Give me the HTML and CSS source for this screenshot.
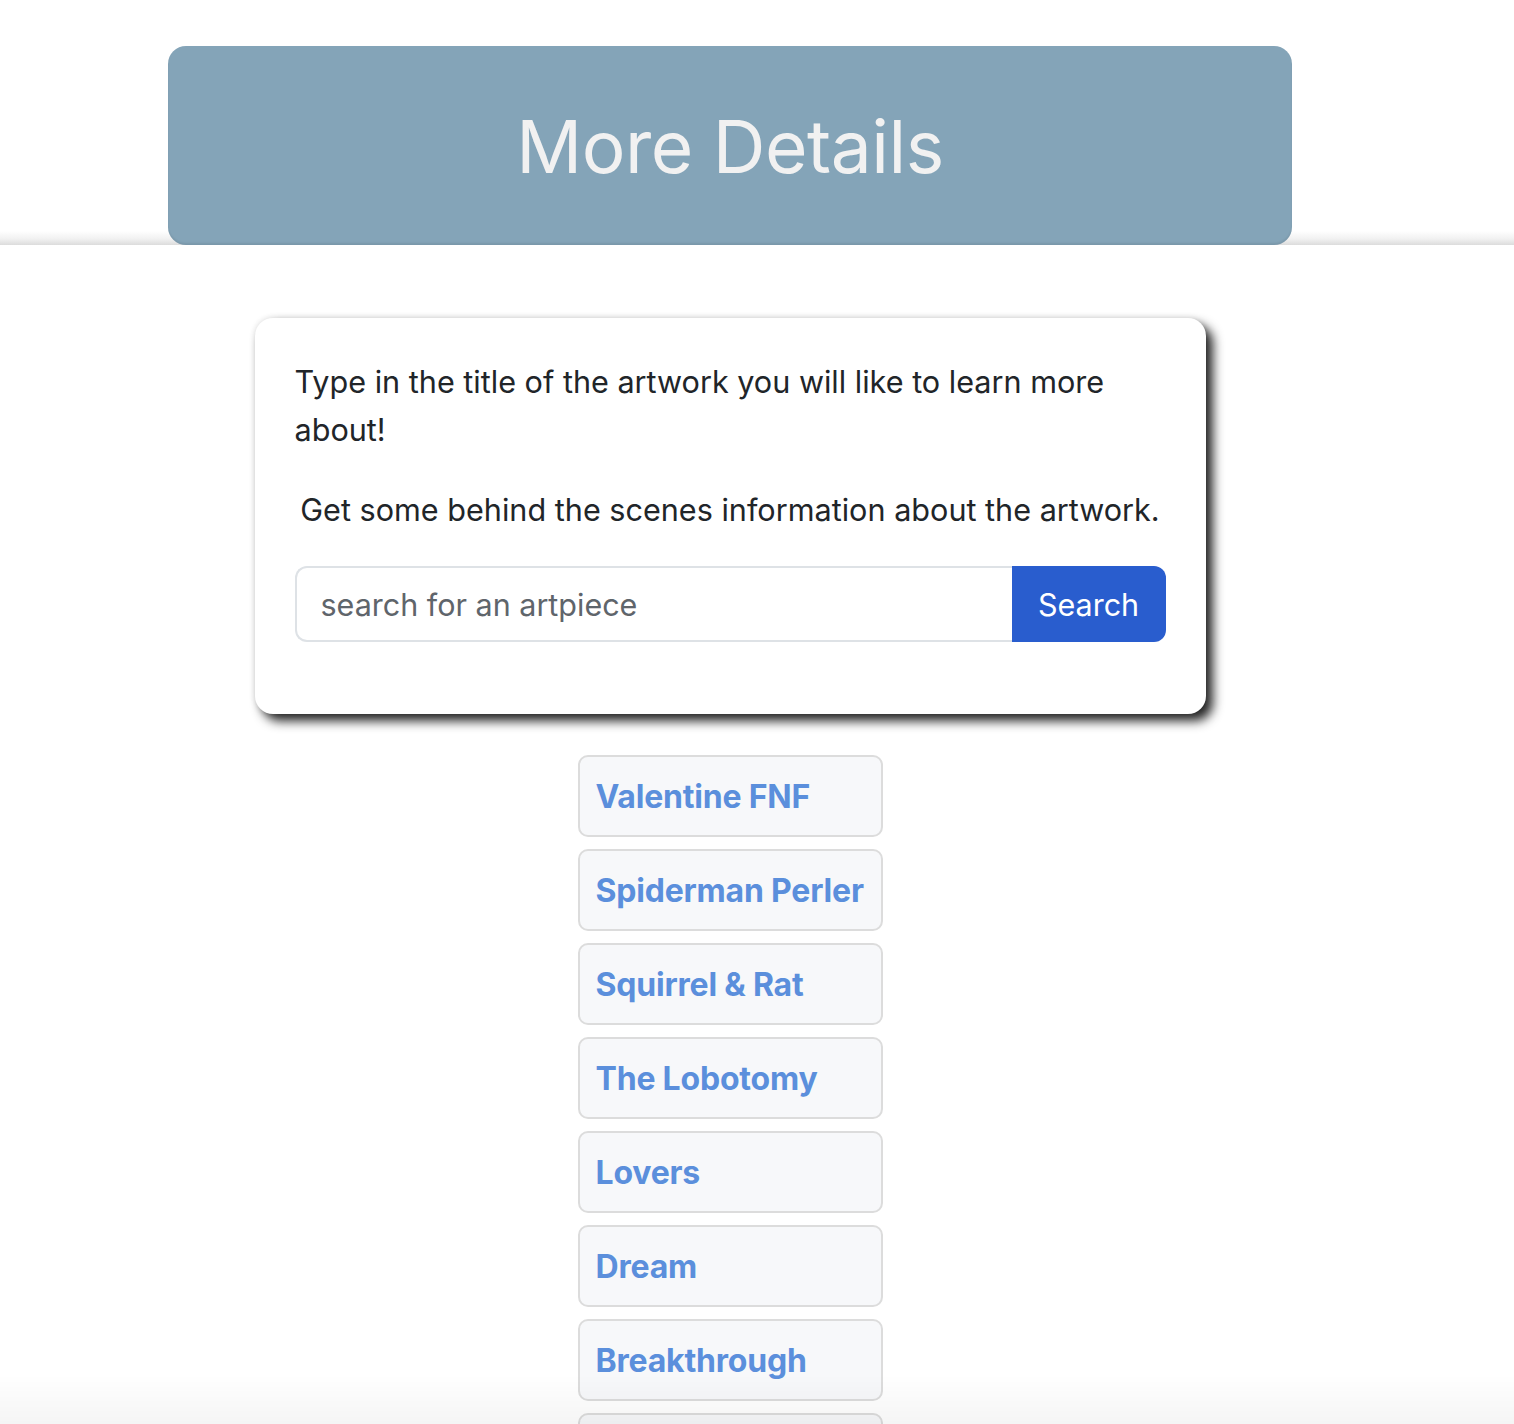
FILE: index.html
```html
<!DOCTYPE html>
<html>
<head>
<meta charset="utf-8">
<link rel="stylesheet" href="styles.css">
</head>
<body>
<header class="topband">
  <div class="wrap">
    <div class="banner"><h1 class="banner-title">More Details</h1></div>
  </div>
</header>
<main class="wrap main">
  <section class="card">
    <p class="lead">Type in the title of the artwork you will like to learn more about!</p>
    <p class="sub">Get some behind the scenes information about the artwork.</p>
    <form class="search" onsubmit="return false">
      <input class="search-input" type="text" placeholder="search for an artpiece">
      <button class="search-btn" type="button">Search</button>
    </form>
  </section>
  <ul class="list">
    <li class="item"><a href="#">Valentine FNF</a></li>
    <li class="item"><a href="#">Spiderman Perler</a></li>
    <li class="item"><a href="#">Squirrel &amp; Rat</a></li>
    <li class="item"><a href="#">The Lobotomy</a></li>
    <li class="item"><a href="#">Lovers</a></li>
    <li class="item"><a href="#">Dream</a></li>
    <li class="item"><a href="#">Breakthrough</a></li>
    <li class="item"><a href="#">Sunset</a></li>
  </ul>
</main>
<div class="bottom-fade"></div>
</body>
</html>
```
FILE: styles.css
```css
* { box-sizing: border-box; }
html, body { margin: 0; padding: 0; }
body {
  font-family: Inter, "Noto Sans", "Liberation Sans", sans-serif;
  color: #212529;
  background: #fff;
}
.wrap {
  width: 1460px;
  display: flex;
  flex-direction: column;
  align-items: center;
}
.topband {
  padding-top: 46px;
  background: linear-gradient(to bottom, #fff 0, #fff calc(100% - 14px), #f1f1f1 calc(100% - 6px), #dcdcdc 100%);
}
.banner {
  width: 1124px;
  height: 199px;
  background: #84a4b8;
  border-radius: 18px;
  display: flex;
  align-items: center;
  justify-content: center;
  box-shadow: inset 0 -2px 2px rgba(0,0,0,0.08);
}
.banner-title {
  margin: 0;
  font-weight: 400;
  font-size: 73px;
  color: #f1f1f1;
  letter-spacing: -0.5px;
  padding-top: 2px;
}
.main { padding-top: 73px; }
.card {
  width: 951px;
  background: #fff;
  border-radius: 18px;
  padding: 40px 40px 40px 40px;
  box-shadow: 0 0 6px rgba(0,0,0,0.12), 7px 7px 11px rgba(0,0,0,0.85);
}
.lead, .sub {
  margin: 0 0 32px 0;
  font-size: 30.6px;
  line-height: 48px;
  color: #212529;
}
.sub { text-align: center; }
.search {
  display: flex;
  height: 76px;
  margin-bottom: 32px;
}
.search-input {
  flex: 1;
  font-family: inherit;
  font-size: 30.5px;
  color: #212529;
  border: 2px solid #dee2e6;
  border-right: none;
  border-radius: 12px 0 0 12px;
  padding: 0 24px;
  outline: none;
  background: #fff;
}
.search-input::placeholder { color: #5f656b; }
.search-btn {
  width: 154px;
  font-family: inherit;
  font-size: 30.5px;
  color: #fff;
  background: #295dce;
  border: none;
  border-radius: 0 12px 12px 0;
  cursor: pointer;
}
.list {
  list-style: none;
  margin: 41px 0 0 0;
  padding: 0;
  display: flex;
  flex-direction: column;
  gap: 12px;
}
.item {
  width: 305px;
  height: 82px;
  border: 2px solid #dcdcdc;
  border-radius: 10px;
  background: #f7f8fa;
  display: flex;
  align-items: center;
  padding-left: 16px;
}
.item a {
  color: #5b8fdc;
  font-weight: 700;
  font-size: 32px;
  text-decoration: none;
  letter-spacing: -0.2px;
}
.bottom-fade {
  position: fixed;
  left: 0; right: 0; bottom: 0;
  height: 50px;
  pointer-events: none;
  background: linear-gradient(to bottom, rgba(0,0,0,0), rgba(0,0,0,0.04));
}
```
